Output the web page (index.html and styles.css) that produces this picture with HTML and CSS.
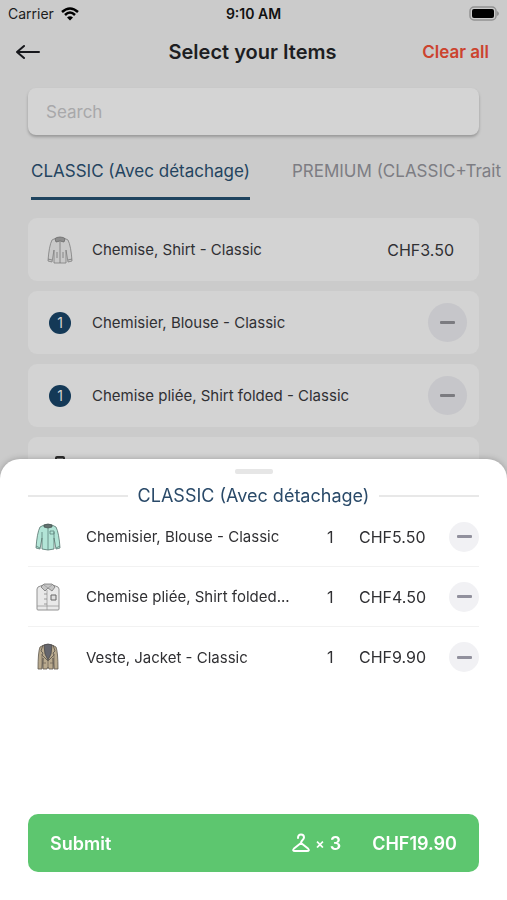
FILE: index.html
```html
<!DOCTYPE html>
<html lang="en">
<head>
    <meta charset="UTF-8">
    <meta name="viewport" content="width=device-width, initial-scale=1.0">
    <title>Select your Items</title>
    <link rel="stylesheet" href="styles.css">
</head>
<body>
    <!-- Garment drawings, used in both lists -->
    <svg class="sprite" aria-hidden="true">
        <symbol id="shirt" viewBox="0 0 26 28">
            <path d="M9 2 5 4Q2 10 1 25l4 1 2-12v13h12V14l2 12 4-1Q24 10 21 4l-4-2-4 3Z" fill="#c9c9c9" stroke="#7d7d7d" stroke-width=".8"/>
            <path d="M8 3Q9 1 13 1t5 2l-1 3-4-1-4 1Z" fill="#8d8d8d" stroke="#6b6b6b" stroke-width=".8"/>
            <path d="M13 6v21M10 16v6M16 16v6M1 23l4 1M25 23l-4 1" fill="none" stroke="#777" stroke-width=".8"/>
        </symbol>
        <symbol id="blouse" viewBox="0 0 26 28">
            <path d="M9 2 5 4Q2 10 1 25l4 1 2-11v11q6 2 12 0V15l2 11 4-1Q24 10 21 4l-4-2Z" fill="#b3e5d7" stroke="#55746d" stroke-width=".8"/>
            <path d="M9 2q4-2 8 0v2l-4 1-4-1Z" fill="#62716f" stroke="#465652" stroke-width=".8"/>
            <path d="M13 5v22M7 15V9M19 15V9M15 8h4v3h-4ZM1 23l4 2M25 23l-4 2" fill="none" stroke="#5c8178" stroke-width=".8"/>
        </symbol>
        <symbol id="folded" viewBox="0 0 26 28">
            <path d="M8 2 3 4 2 6v20q0 1 1 1h20q1 0 1-1V6l-1-2-5-2Z" fill="#e9e9e9" stroke="#929292"/>
            <path d="m9 1-3 3 4 4 3-3 4 3 3-4-3-3Z" fill="#c6c6c6" stroke="#777" stroke-width=".8"/>
            <path d="m9 2 4 3 4-3M12 7v20M2 23h22" fill="none" stroke="#9b9b9b" stroke-width=".8"/>
            <path d="M16 12h5v5H16Z" fill="#ddd" stroke="#666"/>
            <path d="M9 11h3M9 16h3M9 21h3" stroke="#888" stroke-width=".8"/>
        </symbol>
        <symbol id="jacket" viewBox="0 0 26 28">
            <path d="M9 2 5 4Q3 9 3 26h4l1-11v11h4l1-2 1 2h4V15l1 11h4Q23 9 21 4l-4-2Z" fill="#b9aa8e" stroke="#5d574d" stroke-width=".8"/>
            <path d="M9 2q4-2 8 0l-1 9-3 6-3-6Z" fill="#65666d" stroke="#494747" stroke-width=".8"/>
            <path d="m8 2-2 6 2 2-1 2 6 6 6-6-1-2 2-2-2-6" fill="none" stroke="#555049" stroke-width=".8"/>
            <path d="M13 18v7M8 20h3M15 20h3M7 11v14M19 11v14" stroke="#6e6658" stroke-width=".8"/>
        </symbol>
    </svg>

    <main class="screen">
        <div class="status-bar">
            <div class="carrier">
                <span>Carrier</span>
                <svg class="wifi" viewBox="0 0 18 14" fill="none" stroke="#000" stroke-width="2.500">
                    <path d="M1 5Q9-2 17 5M4 8Q9 3 14 8"/>
                    <path d="M9 13.500 6 10.500Q9 8 12 10.500Z" fill="#000" stroke="none"/>
                </svg>
            </div>
            <span class="clock">9:10 AM</span>
            <svg class="battery" viewBox="0 0 30 15">
                <rect x="1" y="1" width="26" height="13" rx="4" fill="none" stroke="#929292" stroke-width="1.500"/>
                <rect x="3" y="3" width="22" height="9" rx="2" fill="#000"/>
                <path d="M28 5q2 1 2 2.500T28 10Z" fill="#929292"/>
            </svg>
        </div>

        <header class="header">
            <button class="back" type="button" aria-label="Back">
                <svg viewBox="0 0 24 16" fill="none" stroke="#17181c" stroke-width="2" stroke-linecap="round" stroke-linejoin="round">
                    <path d="M8 2 1 8l7 6M1 8h22"/>
                </svg>
            </button>
            <h1>Select your Items</h1>
            <button class="clear" type="button">Clear all</button>
        </header>

        <input class="search" type="search" placeholder="Search" aria-label="Search">

        <nav class="tabs">
            <a class="tab active" href="#classic">CLASSIC (Avec détachage)</a>
            <a class="tab" href="#premium">PREMIUM (CLASSIC+Trait</a>
        </nav>

        <ul class="items" id="classic">
            <li class="item">
                <span class="item-icon"><svg class="garment"><use href="#shirt"/></svg></span>
                <span class="item-name">Chemise, Shirt - Classic</span>
                <span class="item-price">CHF3.50</span>
            </li>
            <li class="item">
                <span class="item-icon"><span class="count">1</span></span>
                <span class="item-name">Chemisier, Blouse - Classic</span>
                <button class="minus" type="button" aria-label="Remove one blouse"></button>
            </li>
            <li class="item">
                <span class="item-icon"><span class="count">1</span></span>
                <span class="item-name">Chemise pliée, Shirt folded - Classic</span>
                <button class="minus" type="button" aria-label="Remove one folded shirt"></button>
            </li>
            <li class="item">
                <span class="item-icon">
                    <svg class="garment" viewBox="0 0 26 28"><path d="M9 3q0-1 1-1h6q1 0 1 1v3l4 3v17H5V9l4-3Z" fill="#777" stroke="#2c2c2c" stroke-width="2"/></svg>
                </span>
            </li>
        </ul>
    </main>

    <!-- Basket sheet -->
    <section class="sheet">
        <div class="handle"></div>
        <h2 class="sheet-title">CLASSIC (Avec détachage)</h2>
        <ul class="basket">
            <li class="line">
                <svg class="garment"><use href="#blouse"/></svg>
                <span class="line-name">Chemisier, Blouse - Classic</span>
                <span class="qty">1</span>
                <span class="line-price">CHF5.50</span>
                <button class="minus small" type="button" aria-label="Remove one blouse"></button>
            </li>
            <li class="line">
                <svg class="garment"><use href="#folded"/></svg>
                <span class="line-name">Chemise pliée, Shirt folded...</span>
                <span class="qty">1</span>
                <span class="line-price">CHF4.50</span>
                <button class="minus small" type="button" aria-label="Remove one folded shirt"></button>
            </li>
            <li class="line">
                <svg class="garment"><use href="#jacket"/></svg>
                <span class="line-name">Veste, Jacket - Classic</span>
                <span class="qty">1</span>
                <span class="line-price">CHF9.90</span>
                <button class="minus small" type="button" aria-label="Remove one jacket"></button>
            </li>
        </ul>
        <button class="submit" type="button">
            <span>Submit</span>
            <span class="pieces">
                <svg class="hanger" viewBox="0 0 18 20" fill="none" stroke="#fff" stroke-width="2" stroke-linecap="round" stroke-linejoin="round">
                    <path d="M6 5C6 0 12 1 12 4.500C12 7 9 7 9 10L2 15.500Q0 18 3 18h12q3 0 1-2.500L9 10"/>
                </svg>
                <span class="times">×</span>
                <span>3</span>
            </span>
            <span>CHF19.90</span>
        </button>
    </section>
</body>
</html>
```
FILE: styles.css
```css
* {
    box-sizing: border-box;
}
body {
    margin: 0;
    height: 100vh;
    overflow: hidden;
    font-family: Inter, "Liberation Sans", sans-serif;
    font-size: 16px;
    color: #303033;
    background-color: #cbcbcb;
}
button {
    font-family: inherit;
    border: none;
    padding: 0;
    background: none;
    cursor: pointer;
}
ul {
    list-style: none;
    margin: 0;
    padding: 0;
}
.sprite {
    display: none;
}
.status-bar {
    display: grid;
    grid-template-columns: 1fr auto 1fr;
    align-items: center;
    height: 27px;
    padding: 0 8px;
    font-size: 14px;
    color: #1c1c1c;
}
.carrier {
    display: flex;
    align-items: center;
    gap: 7px;
}
.wifi {
    width: 18px;
    height: 14px;
}
.clock {
    font-weight: 600;
    color: #111;
}
.battery {
    width: 30px;
    height: 15px;
    justify-self: end;
}
.header {
    display: grid;
    grid-template-columns: 1fr auto 1fr;
    align-items: center;
    height: 49px;
    padding: 0 18px 0 16px;
}
.header h1 {
    margin: 0;
    font-size: 20px;
    font-weight: 600;
    color: #1d1e22;
}
.back {
    width: 24px;
    height: 16px;
    justify-self: start;
}
.back svg {
    display: block;
}
.clear {
    justify-self: end;
    font-size: 17px;
    font-weight: 600;
    color: #cc432e;
}
.search {
    display: block;
    width: calc(100% - 56px);
    height: 47px;
    margin: 12px 28px 0;
    padding: 0 18px;
    border: none;
    border-radius: 8px;
    font-family: inherit;
    font-size: 17px;
    background-color: #d4d4d4;
    box-shadow: 0 2px 3px rgba(0, 0, 0, 0.25);
}
.search::placeholder {
    color: #a8a8aa;
}
.tabs {
    display: flex;
    gap: 42px;
    margin-top: 12px;
    padding-left: 31px;
    overflow: hidden;
}
.tab {
    flex: none;
    height: 53px;
    line-height: 48px;
    font-size: 17px;
    color: #7d7d83;
    text-decoration: none;
    border-bottom: 3px solid transparent;
}
.tab.active {
    color: #244460;
    border-bottom-color: #1f445f;
}
.items {
    display: flex;
    flex-direction: column;
    gap: 10px;
    padding: 18px 28px;
}
.item {
    display: flex;
    align-items: center;
    height: 63px;
    padding-right: 12px;
    border-radius: 9px;
    background-color: #d3d3d3;
}
.item-icon {
    display: flex;
    justify-content: center;
    width: 64px;
}
.garment {
    width: 26px;
    height: 28px;
}
.item-name,
.line-name {
    flex: 1;
    font-size: 15px;
}
.item-price {
    padding-right: 13px;
}
.count {
    width: 22px;
    height: 22px;
    border-radius: 50%;
    font-size: 14px;
    line-height: 22px;
    text-align: center;
    color: #d3d3d3;
    background-color: #143957;
}
.minus {
    display: flex;
    align-items: center;
    justify-content: center;
    width: 39px;
    height: 39px;
    border-radius: 50%;
    background-color: #c6c6ca;
}
.minus::before {
    content: "";
    width: 15px;
    height: 3px;
    border-radius: 1px;
    background-color: #7b7b80;
}
.minus.small {
    width: 30px;
    height: 30px;
    background-color: #f1f1f4;
}
.minus.small::before {
    background-color: #91909d;
}
.sheet {
    position: fixed;
    left: 0;
    right: 0;
    bottom: 0;
    display: flex;
    flex-direction: column;
    height: 49vh;
    min-height: 360px;
    padding: 10px 28px 28px;
    border-radius: 20px 20px 0 0;
    background-color: #fff;
    box-shadow: 0 0 6px rgba(0, 0, 0, 0.25);
}
.handle {
    align-self: center;
    width: 38px;
    height: 5px;
    border-radius: 2px;
    background-color: #e6e6e6;
}
.sheet-title {
    display: flex;
    align-items: center;
    gap: 10px;
    margin: 11px 0 0;
    font-size: 18px;
    font-weight: 400;
    line-height: 22px;
    color: #2a4a69;
}
.sheet-title::before,
.sheet-title::after {
    content: "";
    flex: 1;
    height: 2px;
    background-color: #e8e8e8;
}
.basket {
    flex: 1;
}
.line {
    display: flex;
    align-items: center;
    height: 60px;
    padding-left: 7px;
    border-bottom: 1px solid #f2f2f2;
}
.line:last-child {
    border-bottom: none;
}
.line-name {
    padding-left: 25px;
}
.qty {
    width: 32px;
}
.line-price {
    width: 90px;
}
.submit {
    display: flex;
    align-items: center;
    gap: 31px;
    height: 58px;
    padding: 0 22px;
    border-radius: 10px;
    font-size: 18px;
    font-weight: 600;
    color: #fff;
    background-color: #5dc66f;
}
.pieces {
    display: flex;
    align-items: center;
    gap: 5px;
    margin-left: auto;
}
.hanger {
    width: 18px;
    height: 20px;
}
.times {
    font-size: 14px;
}
```
